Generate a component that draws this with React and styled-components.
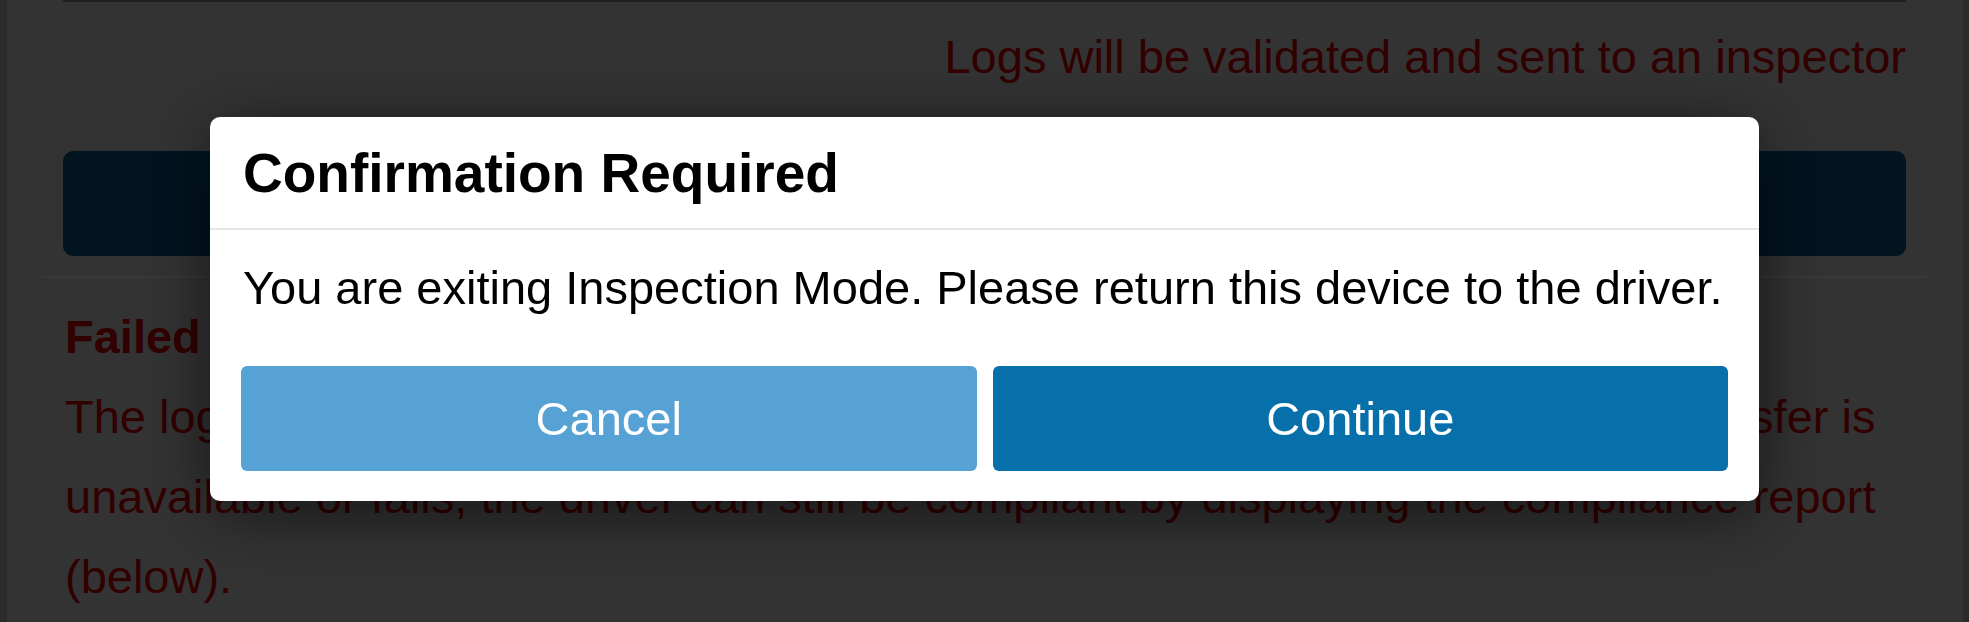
import React from "react";
import styled, { createGlobalStyle } from "styled-components";

const GlobalStyle = createGlobalStyle`
  html, body {
    margin: 0;
    padding: 0;
    overflow: hidden;
  }
  body {
    font-family: "Liberation Sans", Arial, sans-serif;
  }
  * {
    box-sizing: border-box;
  }
`;

const Page = styled.div`
  min-height: 622px;
  background: #e8e8e8;
  border-left: 7px solid #c3c3c3;
  border-right: 6px solid #c3c3c3;
  padding: 0 57px 0 56px;
  font-family: "Liberation Sans", Arial, sans-serif;
`;

const InputEdge = styled.div`
  height: 2px;
  background: #8d8d8d;
`;

const Note = styled.p`
  margin: 21px 0 0;
  text-align: right;
  font-size: 47px;
  line-height: 67px;
  color: #e00000;
`;

const SendBar = styled.div`
  margin-top: 61px;
  height: 105px;
  border-radius: 10px;
  background: #055b91;
  color: #fff;
  font-size: 47px;
  display: flex;
  align-items: center;
  justify-content: center;
`;

const Rule = styled.hr`
  margin: 20px -21px 0;
  border: 0;
  height: 2px;
  background: #ffffff;
`;

const Heading = styled.h4`
  margin: 25px 0 0 2px;
  font-size: 47px;
  line-height: 67px;
  font-weight: 700;
  color: #e00000;
`;

const Paragraph = styled.p`
  margin: 7px 0 0 2px;
  font-size: 47px;
  line-height: 80px;
  color: #e00000;
`;

const Backdrop = styled.div`
  position: fixed;
  inset: 0;
  background: rgba(0, 0, 0, 0.78);
  display: flex;
  justify-content: center;
  align-items: flex-start;
  padding-top: 117px;
`;

const Dialog = styled.div`
  width: 1549px;
  background: #fff;
  border-radius: 10px;
  box-shadow: 0 12px 70px rgba(0, 0, 0, 0.6);
  font-family: "Liberation Sans", Arial, sans-serif;
  color: #000;
`;

const Header = styled.div`
  padding: 26px 33px 25px;
  border-bottom: 2px solid #e6e6e6;
`;

const Title = styled.h3`
  margin: 0;
  font-size: 55px;
  line-height: 60px;
  font-weight: 700;
`;

const Body = styled.div`
  padding: 24px 33px 0;
  font-size: 47px;
  line-height: 67px;
`;

const Footer = styled.div`
  display: flex;
  gap: 16px;
  padding: 45px 31px 30px;
`;

const Button = styled.button`
  flex: 1;
  height: 105px;
  border: 0;
  border-radius: 6px;
  background: ${({ $primary }) => ($primary ? "#0770aa" : "#56a2d5")};
  color: #fff;
  font-family: "Liberation Sans", Arial, sans-serif;
  font-size: 47px;
  cursor: pointer;
`;

const App = () => {
  return (
    <>
      <GlobalStyle />
      <Page>
        <InputEdge />
        <Note>Logs will be validated and sent to an inspector</Note>
        <SendBar>Transfer Logs</SendBar>
        <Rule />
        <Heading>Failed Transfer</Heading>
        <Paragraph>
          The logs could not be emailed to the inspector. If the wireless
          electronic data transfer is
          <br />
          unavailable or fails, the driver can still be compliant by displaying
          the compliance report (below).
        </Paragraph>
      </Page>
      <Backdrop>
        <Dialog role="dialog" aria-modal="true">
          <Header>
            <Title>Confirmation Required</Title>
          </Header>
          <Body>
            You are exiting Inspection Mode. Please return this device to the
            driver.
          </Body>
          <Footer>
            <Button>Cancel</Button>
            <Button $primary>Continue</Button>
          </Footer>
        </Dialog>
      </Backdrop>
    </>
  );
};

export default App;
